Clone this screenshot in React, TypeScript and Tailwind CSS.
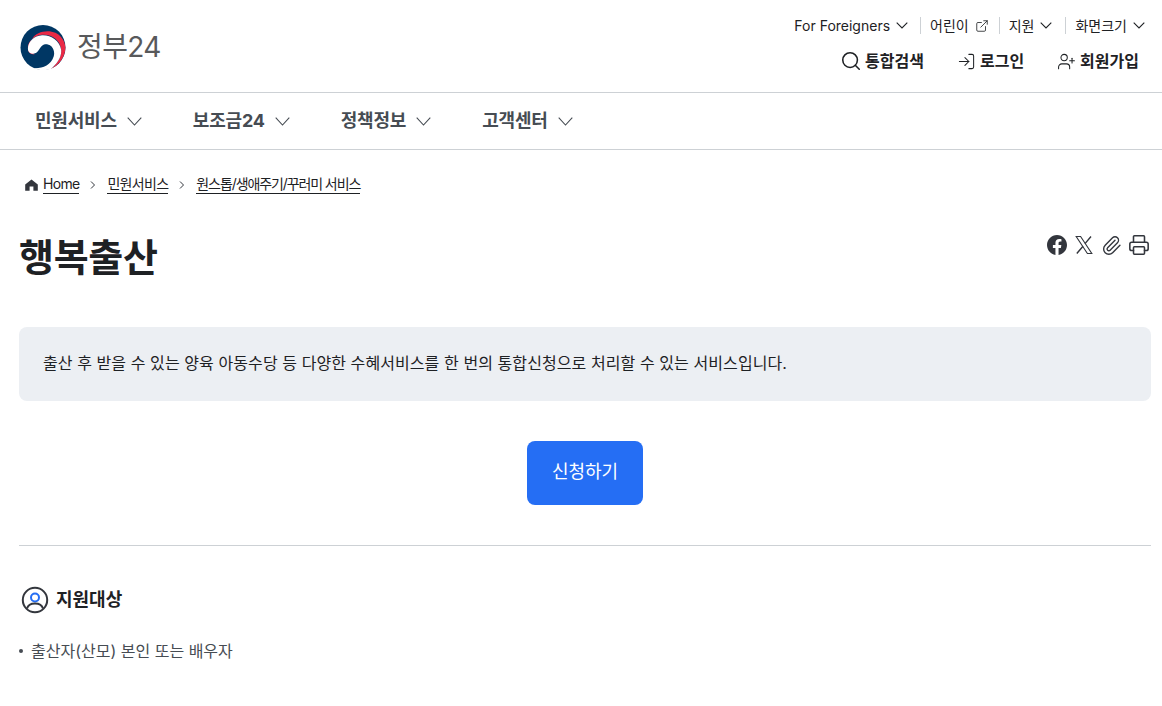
import { ExternalLink, Search, LogIn, UserPlus, Paperclip, Printer } from 'lucide-react';

const FONT = "font-['Inter','Noto_Sans_CJK_KR',sans-serif]";

const NAV = ['민원서비스', '보조금24', '정책정보', '고객센터'];

function Logo() {
  return (
    <svg width="46" height="45" viewBox="1 0 46 46" className="block">
      <circle cx="24" cy="23" r="23" fill="#003764" />
      <path d="M46.9 23.5C46.6 32 41 41 32 45C38 40 43 33 42.6 25.5C42 15 32 9 23 10C14.5 11 8 17 8.6 24.5C9 28.5 12.5 31 16 30.5C11 27 8.5 19 13 14C18 5 36 3 43 13C45.5 16 46.9 20 46.9 23.5Z" fill="#EA2945" />
      <path d="M8.6 24.5C8.5 17 15 11 23 10.5C32 10 41 16 42.5 25C43.5 33 38 40 32 45C25 47 18 46 13 44C22 45 32 42 35 32C37 24 31 18 25 20C20 22 20 29 14 29.5C11 29.5 8.7 27.5 8.6 24.5Z" fill="#fff" />
      <path d="M33.5 24.5C31 18.5 24.5 19.5 22 23.5C19.5 28 16.5 31.5 11.5 29.5C14 36 22 40 29 36C33.5 33.5 35 29 33.5 24.5Z" fill="#003764" />
    </svg>
  );
}

function Chevron({ w }: { w: number }) {
  const h = Math.round(w * 0.6);
  return (
    <svg width={w} height={h} viewBox={`0 0 ${w} ${h}`} fill="none" stroke="currentColor" strokeWidth="1.1" className="shrink-0">
      <path d={`M0.7 0.7L${w / 2} ${h - 1}L${w - 0.7} 0.7`} />
    </svg>
  );
}

function Crumb() {
  return (
    <svg width="8" height="12" viewBox="0 0 8 12" fill="none" stroke="#33363d" strokeWidth="1" className="shrink-0">
      <path d="M2 2.5L5.5 6L2 9.5" />
    </svg>
  );
}

function House() {
  return (
    <svg width="13" height="12" viewBox="0 0 13 12" fill="#33363d" className="shrink-0">
      <path d="M6.5 0.5L12.8 5.5V11.8H8.4V7.5H4.6V11.8H0.2V5.5Z" />
    </svg>
  );
}

function XIcon() {
  return (
    <svg width="20" height="20" viewBox="0 0 20 20" fill="none" stroke="#33363d" strokeWidth="1.1">
      <path d="M2.2 1.5H6.6L17.8 18.5H13.4Z" />
      <path d="M17 1.5L11 8.6M9 11.2L2.8 18.5" strokeWidth="1.4" />
    </svg>
  );
}

function Facebook() {
  return (
    <svg width="20" height="20" viewBox="0 0 24 24" fill="#33363d">
      <path d="M24 12.07C24 5.4 18.63 0 12 0S0 5.4 0 12.07c0 6.03 4.39 11.02 10.13 11.93v-8.44H7.08v-3.49h3.05V9.41c0-3.03 1.79-4.7 4.53-4.7 1.31 0 2.68.24 2.68.24v2.97h-1.51c-1.49 0-1.96.93-1.96 1.89v2.26h3.33l-.53 3.49h-2.8V24C19.61 23.09 24 18.1 24 12.07Z" />
    </svg>
  );
}

function UserCircle() {
  return (
    <svg width="28" height="28" viewBox="0 0 28 28" fill="none">
      <circle cx="14" cy="14" r="12.2" stroke="#33363d" strokeWidth="2" />
      <circle cx="14" cy="11.5" r="4" stroke="#256ef4" strokeWidth="2" />
      <path d="M6 22.5C7 19 10 17.5 14 17.5C18 17.5 21 19 22 22.5" stroke="#33363d" strokeWidth="2" />
    </svg>
  );
}

export default function App() {
  return (
    <div className={`${FONT} bg-white min-h-[706px] text-[#1e2124] overflow-hidden`}>
      {/* Header */}
      <header className="h-[93px] border-b border-[#cdd1d5] flex justify-between pl-5 pr-[17px]">
        <div className="flex items-center gap-[12px] pt-[2px]">
          <Logo />
          <span className="text-[28px] leading-none text-[#58595b] tracking-[-0.6px] -ml-[1px]">정부24</span>
        </div>
        <div className="flex flex-col items-end">
          <div className="flex items-center h-[17px] mt-[17px] text-[14px] leading-none">
            <span className="flex items-center gap-[6px] pr-[12px] border-r border-[#cdd1d5] h-[17px]">
              For Foreigners <Chevron w={12} />
            </span>
            <span className="flex items-center gap-[6px] pl-[9px] pr-[10px] border-r border-[#cdd1d5] h-[17px]">
              어린이 <ExternalLink size={14} strokeWidth={1.4} />
            </span>
            <span className="flex items-center gap-[6px] pl-[9px] pr-[13px] border-r border-[#cdd1d5] h-[17px]">
              지원 <Chevron w={12} />
            </span>
            <span className="flex items-center gap-[6px] pl-[9px] h-[17px]">
              화면크기 <Chevron w={12} />
            </span>
          </div>
          <div className="flex items-center gap-[33px] mt-[16px] pr-[6px] text-[16px] font-bold leading-none">
            <span className="flex items-center gap-[3px]"><Search size={22} strokeWidth={1.7} />통합검색</span>
            <span className="flex items-center gap-[4px]"><LogIn size={19} strokeWidth={1.3} />로그인</span>
            <span className="flex items-center gap-[4px]"><UserPlus size={19} strokeWidth={1.3} />회원가입</span>
          </div>
        </div>
      </header>

      {/* Nav */}
      <nav className="h-[57px] border-b border-[#cdd1d5] flex items-center pl-[35px] gap-[51px] text-[#464c53]">
        {NAV.map((n) => (
          <span key={n} className="flex items-center gap-[10px] text-[18px] font-bold leading-none tracking-[-0.2px]">
            {n}
            <Chevron w={15} />
          </span>
        ))}
      </nav>

      <main className="pl-[19px] w-[1151px]">
        {/* Breadcrumb */}
        <div className="flex items-center h-[22px] mt-[24px] ml-[6px] text-[14px] tracking-[-0.7px] leading-none">
          <House />
          <span className="ml-[5px] border-b border-[#1e2124] pb-[2px]">Home</span>
          <span className="mx-[10px]"><Crumb /></span>
          <span className="border-b border-[#1e2124] pb-[2px]">민원서비스</span>
          <span className="mx-[10px]"><Crumb /></span>
          <span className="border-b border-[#1e2124] pb-[2px] tracking-[-1.1px]">원스톱/생애주기/꾸러미 서비스</span>
        </div>

        {/* Title */}
        <div className="flex justify-between mt-[35px]">
          <h1 className="text-[38px] font-bold leading-[52px] tracking-[-0.3px]">행복출산</h1>
          <div className="flex items-center gap-[7px] h-[28px] pr-[1px] text-[#33363d]">
            <Facebook />
            <XIcon />
            <Paperclip size={21} strokeWidth={1.6} />
            <Printer size={22} strokeWidth={1.7} className="-ml-[1px]" />
          </div>
        </div>

        {/* Summary */}
        <div className="mt-[44px] h-[74px] pb-[2px] bg-[#eceff3] rounded-[8px] flex items-center px-[24px] text-[16px] tracking-[0.08px]">
          출산 후 받을 수 있는 양육 아동수당 등 다양한 수혜서비스를 한 번의 통합신청으로 처리할 수 있는 서비스입니다.
        </div>

        <div className="flex justify-center mt-[40px]">
          <button className="w-[116px] h-[64px] pb-[3px] bg-[#256ef4] rounded-[8px] text-white text-[18px]">신청하기</button>
        </div>

        <hr className="mt-[40px] border-[#cdd1d5]" />

        {/* Target */}
        <div className="flex items-center gap-[7px] mt-[40px] ml-[2px] text-[18px] font-bold leading-none">
          <UserCircle />
          지원대상
        </div>
        <div className="flex items-center mt-[26px] text-[16px] leading-[22px] text-[#464c53]">
          <span className="w-[4px] h-[4px] rounded-full bg-[#464c53] mr-[8px]" />
          출산자(산모) 본인 또는 배우자
        </div>
      </main>
    </div>
  );
}
